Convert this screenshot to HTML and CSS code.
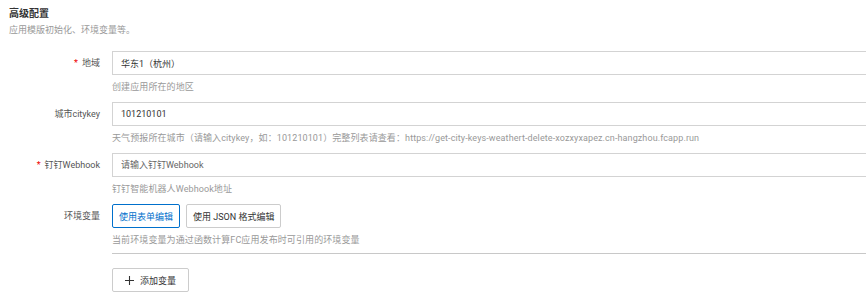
FILE: index.html
```html
<!DOCTYPE html>
<html lang="zh-CN">

<head>
    <meta charset="UTF-8">
    <meta name="viewport" content="width=device-width, initial-scale=1.0">
    <title>高级配置</title>
    <link rel="stylesheet" href="styles.css">
</head>

<body>
    <div class="section">
        <h3 class="section-title">高级配置</h3>
        <p class="section-desc">应用模版初始化、环境变量等。</p>

        <div class="form-item">
            <label class="form-label"><span class="required">*</span>地域</label>
            <div class="form-control">
                <input class="text-input" type="text" value="华东1（杭州）" readonly>
                <div class="help">创建应用所在的地区</div>
            </div>
        </div>

        <div class="form-item">
            <label class="form-label">城市citykey</label>
            <div class="form-control">
                <input class="text-input" type="text" value="101210101">
                <div class="help">天气预报所在城市（请输入citykey，如：101210101）完整列表请查看：https://get-city-keys-weathert-delete-xozxyxapez.cn-hangzhou.fcapp.run</div>
            </div>
        </div>

        <div class="form-item">
            <label class="form-label"><span class="required">*</span>钉钉Webhook</label>
            <div class="form-control">
                <input class="text-input" type="text" placeholder="请输入钉钉Webhook">
                <div class="help">钉钉智能机器人Webhook地址</div>
            </div>
        </div>

        <div class="form-item">
            <label class="form-label">环境变量</label>
            <div class="form-control">
                <div class="btn-group">
                    <button class="btn btn-active">使用表单编辑</button>
                    <button class="btn">使用 JSON 格式编辑</button>
                </div>
                <div class="help">当前环境变量为通过函数计算FC应用发布时可引用的环境变量</div>
                <div class="divider"></div>
                <button class="btn btn-add">
                    <svg width="9" height="9" viewBox="0 0 10 10">
                        <path d="M5 0v10M0 5h10" stroke="#333" stroke-width="1.2" />
                    </svg>
                    添加变量
                </button>
            </div>
        </div>
    </div>
</body>

</html>
```
FILE: styles.css
```css
html,
body {
    margin: 0;
    overflow: hidden;
    background-color: #fff;
}

body {
    font-family: "Roboto", "Noto Sans CJK SC", sans-serif;
    font-size: 9px;
    color: #333;
}

.section {
    padding: 6px 0 0 9px;
}

.section-title {
    margin: 0;
    font-size: 10px;
    line-height: 16px;
    font-weight: bold;
    color: #333;
}

.section-desc {
    margin: 0 0 13px;
    font-size: 9px;
    line-height: 16px;
    color: #999;
}

.form-item {
    display: flex;
    margin-bottom: 7px;
}

.form-label {
    width: 91px;
    flex-shrink: 0;
    padding-right: 12px;
    text-align: right;
    line-height: 24px;
    color: #555;
}

.required {
    color: #e00;
    margin-right: 4px;
}

.form-control {
    width: 760px;
    flex-shrink: 0;
}

.text-input {
    display: block;
    box-sizing: border-box;
    width: 100%;
    height: 24px;
    padding: 0 8px;
    border: 1px solid #d3d3d3;
    font-family: inherit;
    font-size: 9px;
    color: #333;
    outline: none;
}

.text-input::placeholder {
    color: #666;
}

.help {
    margin-top: 4px;
    line-height: 16px;
    color: #999;
    white-space: nowrap;
    letter-spacing: 0.1px;
}

.btn-group {
    display: flex;
    gap: 6px;
}

.btn {
    box-sizing: border-box;
    height: 24px;
    padding: 0 6px;
    background-color: #fff;
    border: 1px solid #ccc;
    border-radius: 2px;
    font-family: inherit;
    font-size: 9px;
    color: #333;
    cursor: pointer;
}

.btn-active {
    border-color: #0070cc;
    color: #0070cc;
}

.divider {
    height: 1px;
    margin-top: 5px;
    background-color: #c8c8c8;
}

.btn-add {
    display: flex;
    align-items: center;
    gap: 6px;
    margin-top: 14px;
    padding: 0 12px;
}
```
